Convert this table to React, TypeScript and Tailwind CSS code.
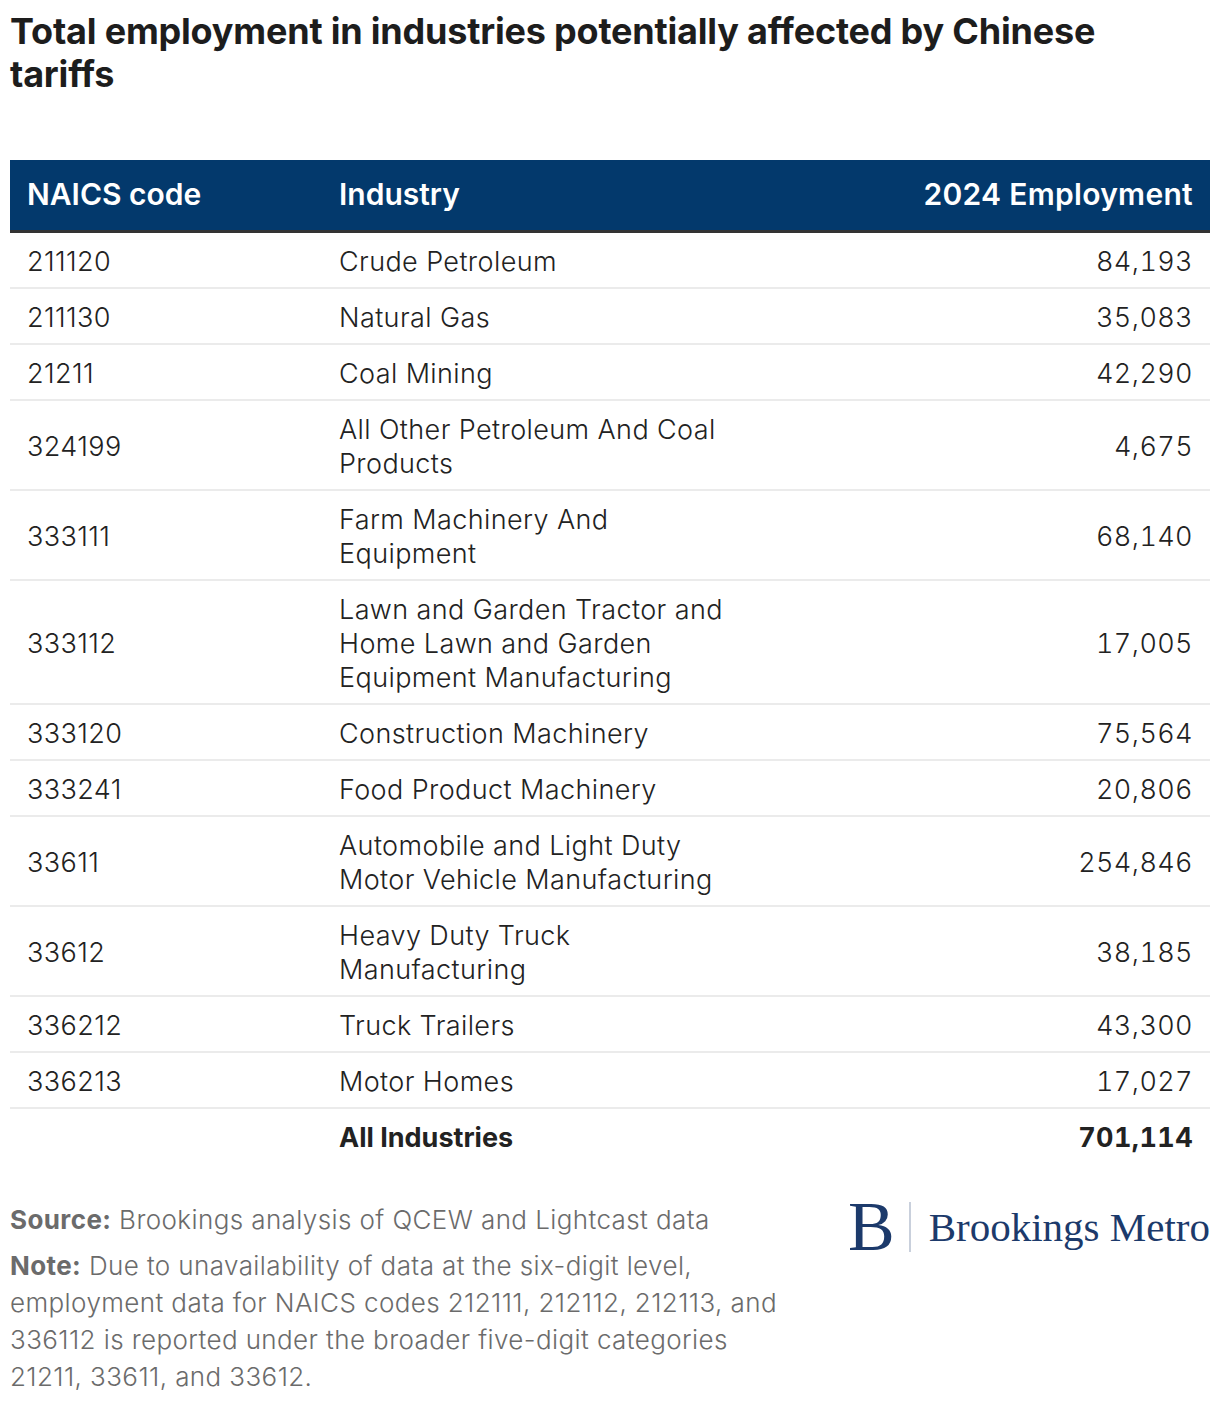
import React from "react";

const rows: [string, string, string][] = [
  ["211120", "Crude Petroleum", "84,193"],
  ["211130", "Natural Gas", "35,083"],
  ["21211", "Coal Mining", "42,290"],
  ["324199", "All Other Petroleum And Coal Products", "4,675"],
  ["333111", "Farm Machinery And Equipment", "68,140"],
  ["333112", "Lawn and Garden Tractor and Home Lawn and Garden Equipment Manufacturing", "17,005"],
  ["333120", "Construction Machinery", "75,564"],
  ["333241", "Food Product Machinery", "20,806"],
  ["33611", "Automobile and Light Duty Motor Vehicle Manufacturing", "254,846"],
  ["33612", "Heavy Duty Truck Manufacturing", "38,185"],
  ["336212", "Truck Trailers", "43,300"],
  ["336213", "Motor Homes", "17,027"],
];

export default function App() {
  return (
    <div className="w-[1220px] bg-white px-[10px] pt-[10px] pb-[20px] font-['Inter',sans-serif] text-[#1a1a1a]">
      <h1 className="max-w-[1120px] text-[36px] font-bold leading-[43px] tracking-[-0.2px] text-[#1d1d1d]">
        Total employment in industries potentially affected by Chinese tariffs
      </h1>
      <table className="mt-[64px] w-full border-collapse">
        <thead>
          <tr className="bg-[#03396c] text-white border-b-[3px] border-[#333333]">
            <th className="h-[71px] w-[312px] pl-[17px] text-left text-[30px] font-semibold">NAICS code</th>
            <th className="pl-[17px] text-left text-[30px] font-semibold">Industry</th>
            <th className="pr-[17px] text-right text-[30px] font-semibold tracking-[0.3px]">2024 Employment</th>
          </tr>
        </thead>
        <tbody className="text-[27px] leading-[34px] font-light tracking-[0.4px] text-[#222]">
          {rows.map(([c, i, e]) => (
            <tr key={c} className="border-b-2 border-[#ebebeb]">
              <td className="pt-[12px] pb-[8px] pl-[17px] align-middle">{c}</td>
              <td className="w-[418px] pt-[12px] pb-[8px] pl-[17px] pr-[17px] align-middle">{i}</td>
              <td className="pt-[12px] pb-[8px] pr-[17px] text-right align-middle tabular-nums">{e}</td>
            </tr>
          ))}
          <tr>
            <td className="pt-[12px] pb-[8px] pl-[17px]"></td>
            <td className="pt-[12px] pb-[8px] pl-[17px] font-bold tracking-normal">All Industries</td>
            <td className="pt-[12px] pb-[8px] pr-[17px] text-right font-bold tabular-nums">701,114</td>
          </tr>
        </tbody>
      </table>
      <div className="mt-[38px] flex items-start justify-between">
        <div className="w-[795px] text-[26px] leading-[37px] font-light text-[#6b6b6b] tracking-[0.4px]">
          <p><span className="font-bold">Source:</span> Brookings analysis of QCEW and Lightcast data</p>
          <p className="mt-[9px]"><span className="font-bold">Note:</span> Due to unavailability of data at the six-digit level, employment data for NAICS codes 212111, 212112, 212113, and 336112 is reported under the broader five-digit categories 21211, 33611, and 33612.</p>
        </div>
        <div className="mt-[1px] flex items-center font-['Liberation_Serif',serif] text-[#1c3a6b]">
          <span className="text-[70px] leading-[50px]">B</span>
          <span className="ml-[14px] mr-[18px] h-[50px] w-[2px] bg-[#c9d0dc]"></span>
          <span className="text-[41px] leading-[50px]">Brookings Metro</span>
        </div>
      </div>
    </div>
  );
}
